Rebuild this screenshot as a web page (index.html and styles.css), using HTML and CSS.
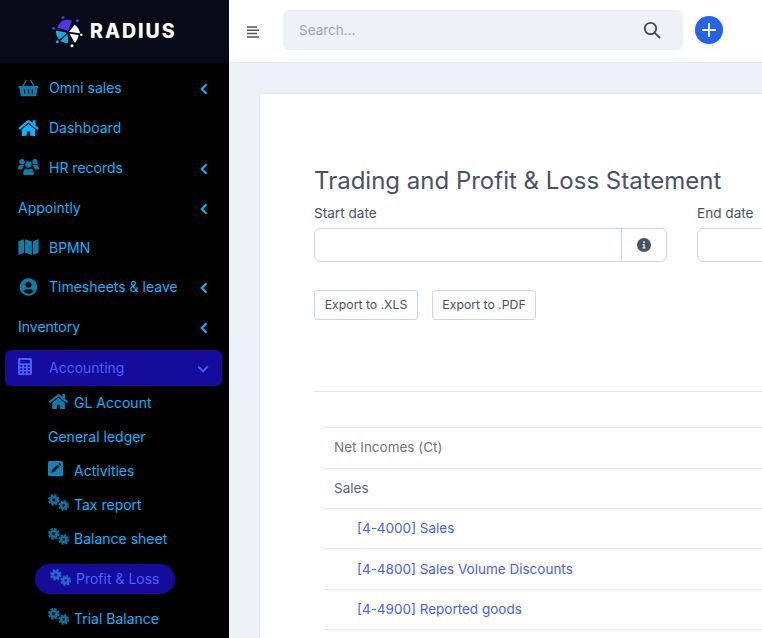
FILE: index.html
```html
<!DOCTYPE html>
<html lang="en">
<head>
    <meta charset="UTF-8">
    <meta name="viewport" content="width=device-width, initial-scale=1.0">
    <title>Trading and Profit &amp; Loss Statement</title>
    <link rel="stylesheet" href="styles.css">
</head>
<body>
    <svg class="sprites" width="0" height="0">
        <symbol id="i-home" viewBox="0 0 576 512"><path d="M280.37 148.26L96 300.11V464a16 16 0 0 0 16 16l112.06-.29a16 16 0 0 0 15.92-16V368a16 16 0 0 1 16-16h64a16 16 0 0 1 16 16v95.64a16 16 0 0 0 16 16.05L464 480a16 16 0 0 0 16-16V300L295.67 148.26a12.19 12.19 0 0 0-15.3 0zM571.6 251.47L488 182.56V44.05a12 12 0 0 0-12-12h-56a12 12 0 0 0-12 12v72.61L318.47 43a48 48 0 0 0-61 0L4.34 251.47a12 12 0 0 0-1.6 16.9l25.5 31A12 12 0 0 0 45.15 301l235.22-193.74a12.19 12.19 0 0 1 15.3 0L530.9 301a12 12 0 0 0 16.9-1.6l25.5-31a12 12 0 0 0-1.7-16.93z"/></symbol>
        <symbol id="i-map" viewBox="0 0 576 512"><path d="M0 117.66v346.32c0 11.32 11.43 19.06 21.94 14.86L160 416V32L20.12 87.95A32.006 32.006 0 0 0 0 117.66zM192 416l192 64V96L192 32v384zM554.06 33.16L416 96v384l139.88-55.95A31.996 31.996 0 0 0 576 394.34V48.02c0-11.32-11.43-19.06-21.94-14.86z"/></symbol>
        <symbol id="i-user" viewBox="0 0 496 512"><path d="M248 8C111 8 0 119 0 256s111 248 248 248 248-111 248-248S385 8 248 8zm0 96c48.6 0 88 39.4 88 88s-39.4 88-88 88-88-39.4-88-88 39.4-88 88-88zm0 344c-58.7 0-111.3-26.6-146.5-68.2 18.8-35.4 55.6-59.8 98.5-59.8 2.4 0 4.8.4 7.1 1.1 13 4.2 26.6 6.9 40.9 6.9 14.3 0 28-2.7 40.9-6.9 2.3-.7 4.7-1.1 7.1-1.1 42.9 0 79.7 24.4 98.5 59.8C359.3 421.4 306.7 448 248 448z"/></symbol>
        <symbol id="i-users" viewBox="0 0 22 17"><circle cx="4.200" cy="3" r="2.800"/><circle cx="17.800" cy="3" r="2.800"/><circle cx="11" cy="6" r="3.400"/><path d="M0 10c0-2 1-3.500 3-3.500h2.300c.6 0 1.100.2 1.500.5C5.500 8 4.700 9.400 4.500 11H1c-.6 0-1-.4-1-1zM22 10c0-2-1-3.500-3-3.500h-2.300c-.6 0-1.100.2-1.500.5 1.300 1 2.100 2.400 2.300 4H21c.6 0 1-.4 1-1zM5.500 14.500c0-2.700 1.500-4.200 3-4.200.8.400 1.600.6 2.500.6s1.700-.2 2.500-.6c1.500 0 3 1.500 3 4.200V16c0 .6-.4 1-1 1h-9c-.6 0-1-.4-1-1z"/></symbol>
        <symbol id="i-basket" viewBox="0 0 20 18"><path fill-rule="evenodd" d="M.8 7h18.400c.4 0 .8.400.8.800v.9c0 .4-.4.800-.8.800h-.4l-.8 6.500c-.1.800-.7 1.300-1.500 1.300H3.500c-.8 0-1.400-.5-1.500-1.300l-.8-6.500H.8c-.4 0-.8-.4-.8-.8v-.9C0 7.400.4 7 .8 7zM5.500 10.500v4h1.200v-4zM9.400 10.500v4h1.200v-4zM13.300 10.500v4h1.200v-4z"/><path d="M3.600 7.500L7.400.6l1 .6-3.400 6.300zM16.400 7.500L12.600.6l-1 .6 3.400 6.300z"/></symbol>
        <symbol id="i-calc" viewBox="0 0 14 17"><path fill-rule="evenodd" d="M1.500 0h11C13.300 0 14 .7 14 1.500v14c0 .8-.7 1.500-1.500 1.500h-11C.7 17 0 16.300 0 15.500v-14C0 .7.700 0 1.500 0zM2.200 2v3.200h9.600V2zM2.200 7v1.800h2V7zM6 7v1.800h2V7zM9.800 7v1.800h2V7zM2.200 10.200V12h2v-1.800zM6 10.200V12h2v-1.800zM9.800 10.200V12h2v-1.800zM2.200 13.400v1.800h2v-1.800zM6 13.400v1.800h2v-1.800zM9.800 13.400v1.800h2v-1.800z"/></symbol>
        <symbol id="i-edit" viewBox="0 0 15 15"><rect width="15" height="15" rx="1.500"/><path fill="#000" d="M9.700 3.400l1.900 1.900-5.700 5.700-2.500.6.600-2.500zM10.400 2.700l.7-.6c.2-.2.500-.2.700 0l1.200 1.200c.2.200.2.500 0 .7l-.6.700z"/></symbol>
        <symbol id="i-cogs" viewBox="0 0 21 17">
            <circle cx="5.800" cy="5.800" r="3" fill="none" stroke="currentColor" stroke-width="2.800"/>
            <circle cx="5.800" cy="5.800" r="4.900" fill="none" stroke="currentColor" stroke-width="1.800" stroke-dasharray="2.200 1.650"/>
            <circle cx="15.700" cy="11.400" r="2.700" fill="none" stroke="currentColor" stroke-width="2.600"/>
            <circle cx="15.700" cy="11.400" r="4.500" fill="none" stroke="currentColor" stroke-width="1.700" stroke-dasharray="2 1.530"/>
        </symbol>
        <symbol id="i-chev" viewBox="0 0 8 12"><path d="M6.500 1.200L1.700 6l4.800 4.800" fill="none" stroke="currentColor" stroke-width="2"/></symbol>
    </svg>

    <div class="app">
        <aside class="sidebar">
            <div class="brand">
                <svg class="brand-logo" width="36" height="36" viewBox="0 0 36 36">
                    <path fill="#5236e8" d="M19 18L8.500 14.500c1-3 2.900-5.500 5.500-7 3-1 6-1 8.800 0z"/>
                    <path fill="#fff" d="M20 18.800l5.700-7c2.800 2 4.800 5 5.300 8.400z"/>
                    <path fill="#fff" d="M20.500 20.800l9 1.200c-.3 3-1.700 5.800-3.700 7.800z"/>
                    <path fill="#19a7e6" d="M18 19.800L7 17.500c-.4 3.500.9 6.800 3.500 9z"/>
                    <path fill="#19a7e6" d="M18.500 21l.8 9c-2.900.2-5.700-.6-7.900-2z"/>
                    <circle cx="14" cy="4.500" r="1.500" fill="#5236e8"/>
                    <circle cx="28.300" cy="7.800" r="1.500" fill="#5236e8"/>
                    <circle cx="4.700" cy="15.200" r="1.500" fill="#5236e8"/>
                    <circle cx="8.300" cy="28.800" r="1.500" fill="#19a7e6"/>
                    <circle cx="23" cy="32.800" r="1.500" fill="#fff"/>
                    <circle cx="32.300" cy="21.800" r="1.300" fill="#fff"/>
                </svg>
                <span class="brand-name">RADIUS</span>
            </div>
            <nav class="menu">
                <a class="item"><svg class="ico ico-basket"><use href="#i-basket"/></svg><span>Omni sales</span><svg class="chev"><use href="#i-chev"/></svg></a>
                <a class="item bright"><svg class="ico ico-home"><use href="#i-home"/></svg><span>Dashboard</span></a>
                <a class="item"><svg class="ico ico-users"><use href="#i-users"/></svg><span>HR records</span><svg class="chev"><use href="#i-chev"/></svg></a>
                <a class="item plain"><span>Appointly</span><svg class="chev"><use href="#i-chev"/></svg></a>
                <a class="item"><svg class="ico ico-map"><use href="#i-map"/></svg><span>BPMN</span></a>
                <a class="item"><svg class="ico ico-user"><use href="#i-user"/></svg><span>Timesheets &amp; leave</span><svg class="chev"><use href="#i-chev"/></svg></a>
                <a class="item plain"><span>Inventory</span><svg class="chev"><use href="#i-chev"/></svg></a>
                <a class="item open"><svg class="ico ico-calc"><use href="#i-calc"/></svg><span>Accounting</span><svg class="chev down"><use href="#i-chev"/></svg></a>
            </nav>
            <div class="submenu">
                <a class="sub"><svg class="sico sico-home"><use href="#i-home"/></svg><span>GL Account</span></a>
                <a class="sub"><span>General ledger</span></a>
                <a class="sub"><svg class="sico sico-edit"><use href="#i-edit"/></svg><span>Activities</span></a>
                <a class="sub"><svg class="sico"><use href="#i-cogs"/></svg><span>Tax report</span></a>
                <a class="sub"><svg class="sico"><use href="#i-cogs"/></svg><span>Balance sheet</span></a>
                <a class="sub current"><svg class="sico"><use href="#i-cogs"/></svg><span>Profit &amp; Loss</span></a>
                <a class="sub"><svg class="sico"><use href="#i-cogs"/></svg><span>Trial Balance</span></a>
            </div>
        </aside>

        <div class="main">
            <header class="topbar">
                <svg class="burger" width="12" height="12" viewBox="0 0 12 12"><path d="M0 1h10M0 4.300h12M0 7.600h10M0 10.900h12" stroke="#4a5568" stroke-width="1.500"/></svg>
                <div class="search">
                    <span class="search-hint">Search...</span>
                    <svg width="18" height="18" viewBox="0 0 18 18" fill="none" stroke="#3f4a5a" stroke-width="1.800"><circle cx="7.500" cy="7.500" r="5.700"/><path d="M11.800 11.800l4.700 4.700" stroke-linecap="round"/></svg>
                </div>
                <button class="add"><svg width="16" height="16" viewBox="0 0 16 16"><path d="M8 1v14M1 8h14" stroke="#fff" stroke-width="1.800"/></svg></button>
            </header>
            <div class="page">
                <section class="card">
                    <h1 class="title">Trading and Profit &amp; Loss Statement</h1>
                    <div class="dates">
                        <div class="field">
                            <label>Start date</label>
                            <div class="datebox">
                                <div class="datebox-input"></div>
                                <div class="datebox-addon"><svg width="14" height="14" viewBox="0 0 14 14"><circle cx="7" cy="7" r="7" fill="#475266"/><path d="M5.700 6h2v3.400h.8v1H5.500v-1h.9V7h-.7zM6.300 3.300h1.500v1.600H6.300z" fill="#fff"/></svg></div>
                            </div>
                        </div>
                        <div class="field">
                            <label>End date</label>
                            <div class="datebox">
                                <div class="datebox-input"></div>
                                <div class="datebox-addon"></div>
                            </div>
                        </div>
                    </div>
                    <div class="exports">
                        <button class="btn">Export to .XLS</button>
                        <button class="btn">Export to .PDF</button>
                    </div>
                    <hr class="rule">
                    <table class="report">
                        <tr><td class="muted tall">Net Incomes (Ct)</td></tr>
                        <tr><td>Sales</td></tr>
                        <tr><td class="acct">[4-4000] Sales</td></tr>
                        <tr><td class="acct tall">[4-4800] Sales Volume Discounts</td></tr>
                        <tr><td class="acct">[4-4900] Reported goods</td></tr>
                    </table>
                </section>
            </div>
        </div>
    </div>
</body>
</html>
```

FILE: styles.css
```css
*{
    box-sizing: border-box;
}
body{
    margin: 0;
    height: 100vh;
    overflow: hidden;
    font-family: Inter, "Liberation Sans", sans-serif;
    background: #eef1f7;
    color: #475266;
}
.sprites{
    position: absolute;
}
.app{
    display: flex;
    height: 100vh;
}
.sidebar{
    width: 229px;
    flex: none;
    background: #000;
    color: #06b6ff;
    font-size: 14px;
    font-weight: 400;
}
.brand{
    height: 63px;
    background: #070b17;
    display: flex;
    align-items: center;
    padding: 0 0 2px 49px;
    gap: 5px;
}
.brand-name{
    color: #fff;
    font-size: 19.5px;
    font-weight: 800;
    letter-spacing: 2px;
}
.menu{
    padding: 5px 7px 0 5px;
}
.item{
    display: flex;
    align-items: center;
    height: 39.8px;
    padding-left: 13px;
}
.item span{
    flex: 1;
    padding-left: 31px;
}
.item.plain span{
    padding-left: 0;
}
.ico{
    width: 21px;
    height: 18px;
    margin-right: -21px;
    color: #0a7dac;
    fill: currentColor;
    flex: none;
}
.item.bright .ico{
    color: #06b6ff;
}
.chev{
    width: 8px;
    height: 12px;
    margin: 3px 14px 0 0;
    flex: none;
    color: #06b6ff;
}
.chev.down{
    transform: rotate(-90deg);
    color: #3d5bff;
    margin-right: 15px;
}
.item.open{
    height: 36px;
    margin-top: 3px;
    background: #160c9c;
    border-radius: 6px;
    color: #4462ff;
}
.item.open .ico{
    color: #4462ff;
    width: 14px;
    height: 17px;
    margin: -3px -14px 0 0;
}
.submenu{
    padding: 0 0 0 48px;
}
.sub{
    display: flex;
    align-items: center;
    height: 34px;
    gap: 5px;
}
.sico{
    width: 21px;
    height: 17px;
    flex: none;
    color: #0a74a0;
    fill: currentColor;
    margin-top: -4px;
}
.sico-edit{
    width: 15px;
    height: 15px;
    margin-right: 6px;
    color: #0d86b8;
}
.sico-home{
    margin-top: -2px;
    color: #0a7dac;
}
.sub.current{
    height: 30px;
    width: 140px;
    margin: 8px 0 8px -13px;
    padding-left: 15px;
    border-radius: 15px;
    background: #160c9c;
    color: #4462ff;
}
.sub.current .sico{
    color: #2a69c9;
    margin-top: -2px;
}
.main{
    flex: 1;
    min-width: 0;
    overflow: hidden;
}
.topbar{
    height: 63px;
    background: #fff;
    border-bottom: 1px solid #e2e8f0;
    display: flex;
    align-items: center;
    padding: 0 0 2px 18px;
}
.burger{
    flex: none;
    margin-top: 4px;
}
.search{
    width: 400px;
    height: 40px;
    margin-left: 24px;
    background: #eef1f6;
    border-radius: 6px;
    display: flex;
    align-items: center;
    justify-content: space-between;
    padding: 0 22px 0 16px;
    font-size: 13.5px;
}
.search-hint{
    color: #9aa5b8;
}
.add{
    width: 28px;
    height: 28px;
    margin-left: 12px;
    border: 0;
    padding: 0;
    border-radius: 50%;
    background: #2563eb;
    display: flex;
    align-items: center;
    justify-content: center;
}
.page{
    padding: 30px 0 0 30px;
}
.card{
    width: 900px;
    height: 700px;
    background: #fff;
    border: 1px solid #e8ecf3;
    border-right: 0;
    padding: 71px 0 0 54px;
}
.title{
    margin: 0;
    font-size: 24px;
    line-height: 32px;
    font-weight: 400;
    color: #475266;
}
.dates{
    display: flex;
    gap: 30px;
    margin-top: 7px;
}
.field{
    width: 353px;
}
.field label{
    display: block;
    font-size: 13.6px;
    font-weight: 400;
    line-height: 18px;
    margin-bottom: 6px;
}
.datebox{
    display: flex;
    height: 34px;
    border: 1px solid #cbd5e1;
    border-radius: 6px;
    background: #fff;
}
.datebox-input{
    flex: 1;
}
.datebox-addon{
    width: 45px;
    border-left: 1px solid #cbd5e1;
    display: flex;
    align-items: center;
    justify-content: center;
}
.exports{
    display: flex;
    gap: 14px;
    margin-top: 28px;
}
.btn{
    height: 30px;
    width: 104px;
    padding: 0 0 2px;
    background: #fff;
    border: 1px solid #cbd5e1;
    border-radius: 3px;
    font-family: inherit;
    font-size: 12.25px;
    font-weight: 400;
    color: #475266;
}
.rule{
    margin: 71px 0 0;
    border: 0;
    border-top: 1px solid #e2e8f0;
}
.report{
    width: 836px;
    margin: 35px 0 0 10px;
    border-collapse: collapse;
    font-size: 13.5px;
}
.report td{
    height: 40px;
    padding: 0 10px 1px;
    border-top: 1px solid #e2e8f0;
    border-bottom: 1px solid #e2e8f0;
    color: #5a6678;
}
.report td.tall{
    height: 41px;
}
.report td.muted{
    padding-bottom: 2px;
    color: #6b7685;
}
.report td.acct{
    padding-left: 33px;
    color: #4560f5;
}
```
